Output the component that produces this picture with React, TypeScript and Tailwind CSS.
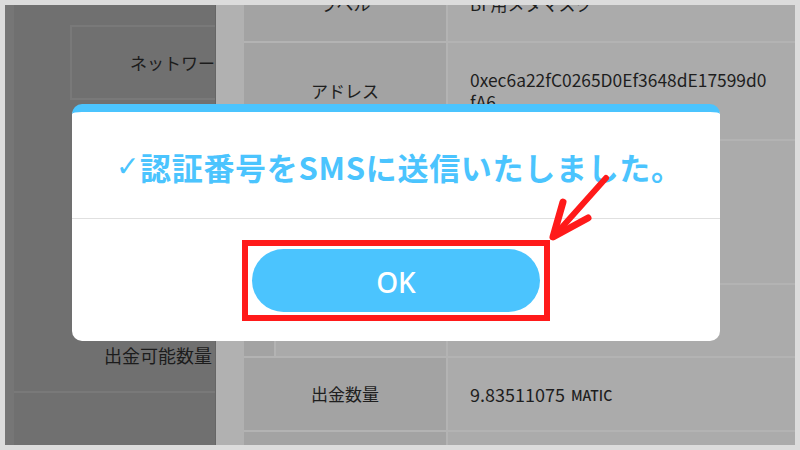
const jp = { fontFamily: '"Noto Sans CJK JP", "Noto Sans", sans-serif' };

const Cell = ({ label, children, h, cls = "" }: { label?: string; children?: React.ReactNode; h: string; cls?: string }) => {
  return (
    <div className={`grid shrink-0 grid-cols-[202px_1fr] gap-[2px] ${h} ${cls}`}>
      <div className="flex items-center justify-center bg-[#a3a3a3] text-[17px] text-[#1e1e1e]">{label}</div>
      <div className="flex items-center bg-[#ababab] pl-[22px] text-[17px] text-[#1e1e1e]">{children}</div>
    </div>
  );
};

const App = () => {
  return (
    <div className="relative h-[450px] w-[800px] overflow-hidden bg-[#dcdcdc] p-[5px]" style={jp}>
      <div className="flex h-full overflow-hidden">
        {/* left side panel */}
        <div className="flex w-[210px] shrink-0 bg-[#707070]">
          <div className="w-[9px] bg-[#767676]" />
          <div className="flex flex-1 flex-col overflow-hidden text-[17px] text-[#1c1c1c]">
            <div className="h-[20px] shrink-0" />
            <div className="ml-[56px] flex h-[75px] shrink-0 items-center justify-end border-y-2 border-l-2 border-[#797979]">
              <span className="-mr-[17px] whitespace-nowrap">ネットワーク</span>
            </div>
            <div className="h-[219px] shrink-0" />
            <div className="flex h-[74px] shrink-0 items-center justify-end border-b-2 border-[#797979] pr-[3px]">
              <span className="whitespace-nowrap text-[18px]">出金可能数量</span>
            </div>
            <div className="flex-1" />
          </div>
        </div>
        <div className="w-px shrink-0 bg-[#666666]" />
        <div className="w-[28px] shrink-0 bg-[#b1b1b1]" />

        {/* table */}
        <div className="flex flex-1 flex-col gap-[2px] overflow-hidden bg-[#b3b3b3]">
          <Cell label="ラベル" h="h-[74px]" cls="-mt-[38px]">
            BF用メタマスク
          </Cell>
          <Cell label="アドレス" h="h-[96px]">
            <div className="text-[17.4px] leading-[22px]">
              <div>0xec6a22fC0265D0Ef3648dE17599d0</div>
              <div>fA6</div>
            </div>
          </Cell>
          <Cell h="h-[142px]" />
          <div className="grid h-[71px] shrink-0 grid-cols-[202px_1fr] gap-[2px]">
            <div className="flex gap-[2px] bg-[#b3b3b3]">
              <div className="w-[30px] bg-[#a3a3a3]" />
              <div className="flex-1 bg-[#aaaaaa]" />
            </div>
            <div className="bg-[#ababab]" />
          </div>
          <div className="grid h-[72px] shrink-0 grid-cols-[202px_1fr] gap-[2px]">
            <div className="flex items-center justify-center bg-[#a3a3a3] text-[17px] text-[#1e1e1e]">出金数量</div>
            <div className="flex items-center bg-[#ababab] pl-[22px] text-[#1e1e1e]">
              <span className="text-[18px]">9.83511075</span>
              <span className="ml-[6px] mt-[3px] text-[14px] font-medium">MATIC</span>
            </div>
          </div>
          <div className="grid flex-1 grid-cols-[202px_1fr] gap-[2px]">
            <div className="bg-[#a3a3a3]" />
            <div className="bg-[#ababab]" />
          </div>
        </div>
      </div>

      {/* modal */}
      <div className="absolute left-[72px] top-[104px] flex h-[237px] w-[648px] flex-col overflow-hidden rounded-[10px] border-t-[8px] border-[#4bc4fe] bg-white">
        <div className="flex h-[106px] items-center pl-[44px] pt-[4px] text-[#4bc4fe]">
          <span className="w-[24px] text-[28px] leading-none" style={{ fontFamily: '"DejaVu Sans", sans-serif' }}>
            ✓
          </span>
          <span className="whitespace-nowrap text-[31px] font-bold tracking-[0.7px]">認証番号をSMSに送信いたしました。</span>
        </div>
        <div className="h-px bg-[#e0e0e0]" />
        <div className="flex flex-1 items-center justify-center">
          <div className="border-[6px] border-[#ff1a1a] px-[4px] py-[3px]">
            <button
              className="flex h-[63px] w-[288px] items-center justify-center rounded-full bg-[#4bc4fe] pt-[3px] text-[28px] font-medium text-white"
              style={{ fontFamily: '"Noto Sans", sans-serif' }}
            >
              OK
            </button>
          </div>
        </div>
      </div>

      {/* red arrow */}
      <svg className="absolute left-[545px] top-[170px]" width="70" height="75" viewBox="0 0 70 75">
        <line x1="61" y1="8" x2="10" y2="65" stroke="#ff1a1a" strokeWidth="6" strokeLinecap="round" />
        <polyline points="18,32 8,67 43,48" fill="none" stroke="#ff1a1a" strokeWidth="7" strokeLinecap="round" strokeLinejoin="round" />
      </svg>
    </div>
  );
};

export default App;
